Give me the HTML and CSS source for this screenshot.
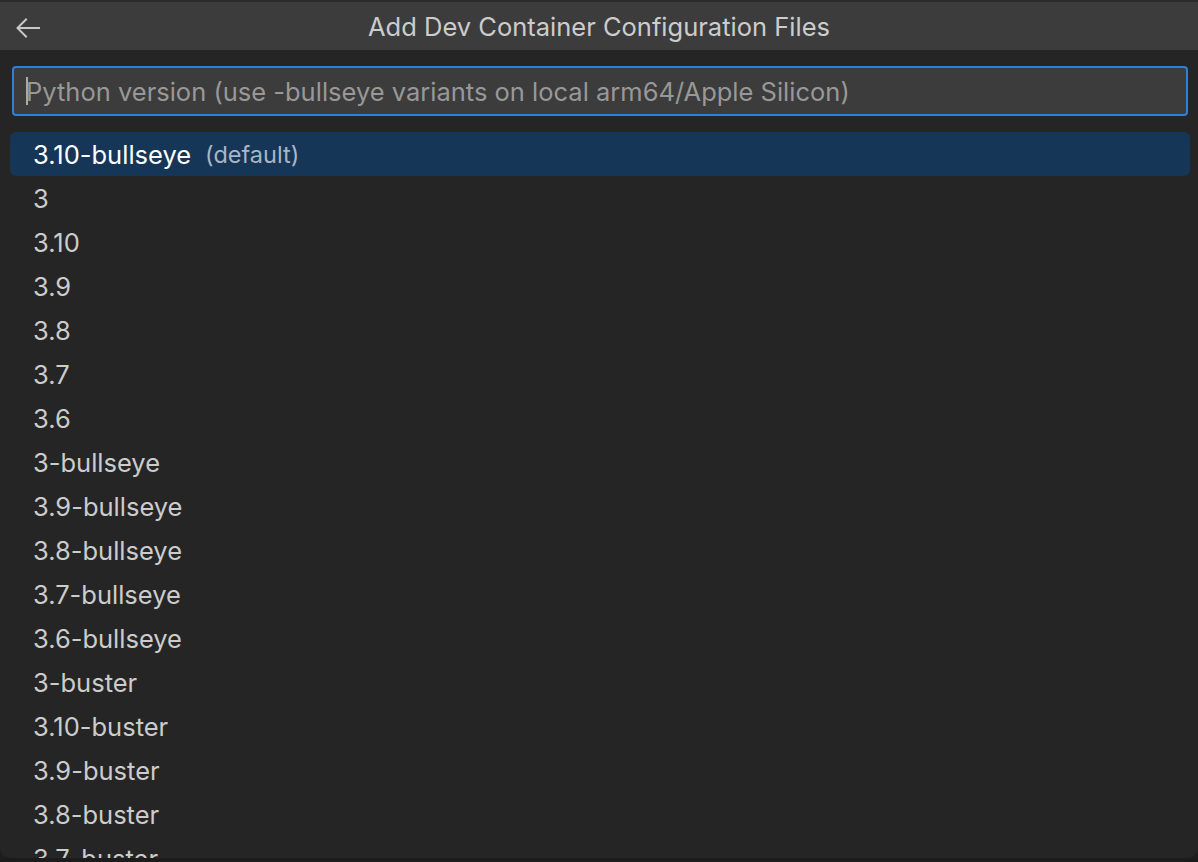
FILE: index.html
```html
<!DOCTYPE html>
<html>
<head>
<meta charset="utf-8">
<link rel="stylesheet" href="styles.css">
</head>
<body>
<div class="widget">
  <div class="titlebar">
    <svg class="back" width="26" height="22" viewBox="0 0 26 22">
      <path d="M24 11H3M11 2.5L2.5 11L11 19.5" fill="none" stroke="#c8c8c8" stroke-width="2" stroke-linecap="square"/>
    </svg>
    <div class="title">Add Dev Container Configuration Files</div>
  </div>
  <div class="input-wrap">
    <div class="input"><span class="caret"></span><span class="placeholder">Python version (use -bullseye variants on local arm64/Apple Silicon)</span></div>
  </div>
  <div class="list">
    <div class="row selected"><span class="label">3.10-bullseye</span><span class="desc">(default)</span></div>
    <div class="row"><span class="label">3</span></div>
    <div class="row"><span class="label">3.10</span></div>
    <div class="row"><span class="label">3.9</span></div>
    <div class="row"><span class="label">3.8</span></div>
    <div class="row"><span class="label">3.7</span></div>
    <div class="row"><span class="label">3.6</span></div>
    <div class="row"><span class="label">3-bullseye</span></div>
    <div class="row"><span class="label">3.9-bullseye</span></div>
    <div class="row"><span class="label">3.8-bullseye</span></div>
    <div class="row"><span class="label">3.7-bullseye</span></div>
    <div class="row"><span class="label">3.6-bullseye</span></div>
    <div class="row"><span class="label">3-buster</span></div>
    <div class="row"><span class="label">3.10-buster</span></div>
    <div class="row"><span class="label">3.9-buster</span></div>
    <div class="row"><span class="label">3.8-buster</span></div>
    <div class="row"><span class="label">3.7-buster</span></div>
  </div>
</div>
<div class="under"></div>
</body>
</html>
```

FILE: styles.css
```css
html, body {
  margin: 0;
  padding: 0;
  background: #1e1e1e;
  width: 1198px;
  height: 862px;
  overflow: hidden;
  font-family: Inter, "Noto Sans", sans-serif;
}
.widget {
  height: 856px;
  background: #252526;
  border-top: 2px solid #2b2b2b;
  border-radius: 0 0 10px 10px;
  overflow: hidden;
  display: flex;
  flex-direction: column;
}
.titlebar {
  height: 48px;
  flex: none;
  background: #3c3c3c;
  display: flex;
  align-items: center;
  position: relative;
}
.back {
  position: absolute;
  left: 15px;
  top: 15px;
}
.title {
  flex: 1;
  text-align: center;
  color: #cccccc;
  font-size: 25.5px;
  padding-top: 1px;
}
.input-wrap {
  padding: 16px 10px 0 12px;
  flex: none;
}
.input {
  height: 46px;
  border: 2px solid #2f7fd6;
  border-radius: 4px;
  background: #3c3c3c;
  display: flex;
  align-items: center;
  padding-left: 12px;
}
.caret {
  width: 2px;
  height: 28px;
  background: #aaaaaa;
  margin-right: -2px;
}
.placeholder {
  color: #989898;
  font-size: 25.5px;
}
.list {
  padding: 16px 8px 0 10px;
  display: flex;
  flex-direction: column;
}
.row {
  height: 44px;
  flex: none;
  display: flex;
  align-items: center;
  padding-left: 23px;
  color: #cccccc;
  font-size: 25.5px;
  border-radius: 6px;
}
.row.selected {
  background: #153657;
  color: #ffffff;
}
.desc {
  margin-left: 14px;
  color: #a9b6c4;
  font-size: 23.5px;
}
.under {
  height: 4px;
  background: #1c1c1c;
}
```
